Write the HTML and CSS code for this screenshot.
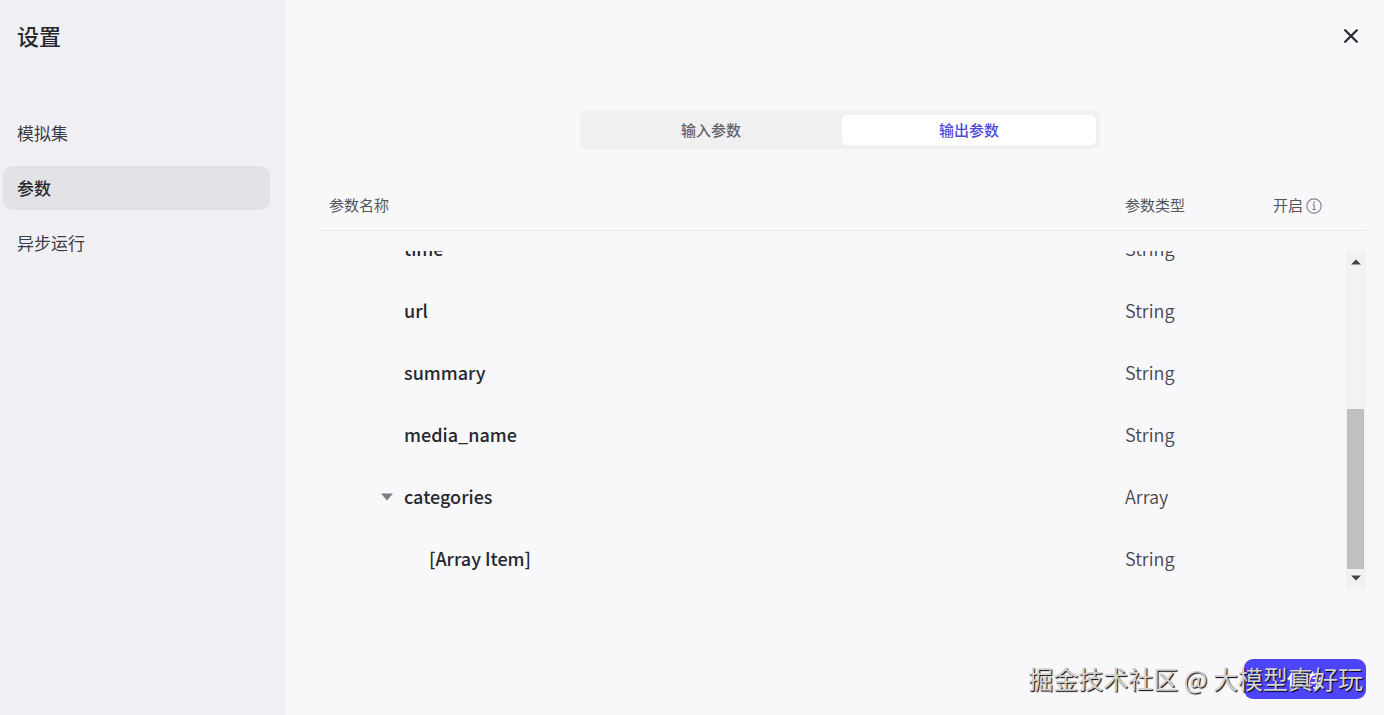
FILE: index.html
```html
<!DOCTYPE html>
<html lang="zh-CN">
<head>
<meta charset="utf-8">
<title>设置</title>
<link rel="stylesheet" href="styles.css">
</head>
<body>
<div class="layout">
  <aside class="sidebar">
    <h1 class="title">设置</h1>
    <nav class="menu">
      <a class="menu-item" href="#mock">模拟集</a>
      <a class="menu-item active" href="#params">参数</a>
      <a class="menu-item" href="#async">异步运行</a>
    </nav>
  </aside>
  <main class="content">
    <header class="top">
      <button class="close" type="button" aria-label="关闭">
        <svg width="16" height="16" viewBox="0 0 16 16"><path d="M2.2 2.2 13.8 13.8M13.8 2.2 2.2 13.8" fill="none" stroke="#2b2b33" stroke-width="2.3" stroke-linecap="round"/></svg>
      </button>
    </header>
    <div class="tabs" role="tablist">
      <button class="tab" type="button" role="tab">输入参数</button>
      <button class="tab selected" type="button" role="tab" aria-selected="true">输出参数</button>
    </div>
    <table class="grid head">
      <colgroup><col><col class="col-type"><col class="col-enable"></colgroup>
      <tr>
        <th>参数名称</th>
        <th>参数类型</th>
        <th><span class="enable">开启<svg width="16" height="18" viewBox="0 0 16 18"><circle cx="8" cy="10" r="7.2" fill="none" stroke="#85858b" stroke-width="1.2"/><path d="M6.5 8.8H8.2V13.5M6.3 13.5H10" fill="none" stroke="#85858b" stroke-width="1.1"/><circle cx="8" cy="6.5" r=".9" fill="#85858b"/></svg></span></th>
      </tr>
    </table>
    <div class="scroll">
      <div class="rows">
        <table class="grid body">
          <colgroup><col><col class="col-type"><col class="col-space"></colgroup>
          <tr><td class="leaf">time</td><td>String</td><td></td></tr>
          <tr><td class="leaf">url</td><td>String</td><td></td></tr>
          <tr><td class="leaf">summary</td><td>String</td><td></td></tr>
          <tr><td class="leaf">media_name</td><td>String</td><td></td></tr>
          <tr><td class="branch"><button class="toggle" type="button"><svg width="12" height="10" viewBox="0 0 12 10"><path d="M0 2.5H12L6 9.5Z" fill="#7d7d82"/></svg>categories</button></td><td>Array</td><td></td></tr>
          <tr><td class="nested">[Array Item]</td><td>String</td><td></td></tr>
        </table>
      </div>
      <div class="bar" aria-hidden="true">
        <svg width="10" height="6" viewBox="0 0 10 6"><path d="M0 5.5 5 .5 10 5.5Z" fill="#444"/></svg>
        <div class="track"><div class="thumb"></div></div>
        <svg width="10" height="6" viewBox="0 0 10 6"><path d="M0 .5 5 5.5 10 .5Z" fill="#444"/></svg>
      </div>
    </div>
    <footer class="footer">
      <button class="save" type="button">保存</button>
    </footer>
  </main>
  <div class="watermark">掘金技术社区 @ 大模型真好玩</div>
</div>
</body>
</html>
```
FILE: styles.css
```css
* { box-sizing: border-box; }
body {
  margin: 0;
  background: #f8f8fb;
  color: #28282e;
  font-family: "Noto Sans CJK SC", sans-serif;
}
button { border: 0; padding: 0; background: none; font: inherit; color: inherit; }
svg { display: block; flex: none; }
.layout { position: relative; display: flex; min-height: 100vh; }
.sidebar { width: 285px; flex: none; background: #f0eff4; padding: 19px 15px 0 3px; }
.title { margin: 0 0 0 14px; font-size: 22px; line-height: 32px; font-weight: 500; }
.menu { display: flex; flex-direction: column; gap: 11px; margin-top: 60px; }
.menu-item {
  padding: 0 14px;
  border-radius: 10px;
  font-size: 17px;
  line-height: 44px;
  color: #3d3d45;
  text-decoration: none;
}
.menu-item.active { background: #e3e2e7; color: #28282e; font-weight: 500; }
.content { flex: 1; min-width: 0; display: flex; flex-direction: column; padding: 28px 18px 16px 33px; }
.top { display: flex; justify-content: flex-end; padding-right: 7px; }
.tabs {
  align-self: center;
  display: flex;
  gap: 4px;
  width: 50%;
  max-width: 520px;
  min-width: 300px;
  margin: 66px 4px 0 0;
  padding: 5px 4px 4px;
  border-radius: 8px;
  background: #f0f0f3;
}
.tab { flex: 1; border-radius: 5px; font-size: 15px; line-height: 30px; font-weight: 500; color: #626267; }
.tab.selected { background: #fff; color: #4e4bdc; }
.grid { width: 100%; table-layout: fixed; border-collapse: collapse; }
.col-type { width: 148px; }
.col-enable { width: 104px; }
.col-space { width: 84px; }
.head { margin-top: 31px; border-bottom: 1px solid #e6e6ea; }
.head th { height: 50px; padding: 0 11px; text-align: left; font-size: 15px; font-weight: 400; color: #55555b; }
.enable { display: flex; align-items: center; gap: 3px; }
.scroll { display: flex; height: 338px; margin-top: 20px; }
.rows { flex: 1; display: flex; flex-direction: column; justify-content: flex-end; overflow: hidden; }
.body td { height: 62px; padding: 0 11px; font-size: 18px; font-weight: 350; color: #45454b; }
.body td:first-child { font-weight: 500; color: #28282e; }
.body .leaf { padding-left: 86px; }
.body .branch { padding-left: 63px; }
.body .nested { padding-left: 111px; }
.toggle { display: flex; align-items: center; gap: 11px; }
.bar {
  width: 20px;
  display: flex;
  flex-direction: column;
  align-items: center;
  gap: 6px;
  padding: 8px 1px 8px 0;
  background: #f2f2f3;
}
.track { flex: 1; display: flex; flex-direction: column; justify-content: flex-end; }
.thumb { width: 17px; height: 160px; background: #c0c0c1; }
.footer { display: flex; justify-content: flex-end; margin-top: auto; }
.save { width: 122px; border-radius: 9px; background: #4d44fb; color: #fff; font-size: 18px; line-height: 40px; font-weight: 500; }
.watermark {
  position: absolute;
  right: 21px;
  bottom: 19px;
  font-size: 25px;
  line-height: 36px;
  color: #d2d2d4;
  text-shadow: 1px 1px 1px #000;
}
```
